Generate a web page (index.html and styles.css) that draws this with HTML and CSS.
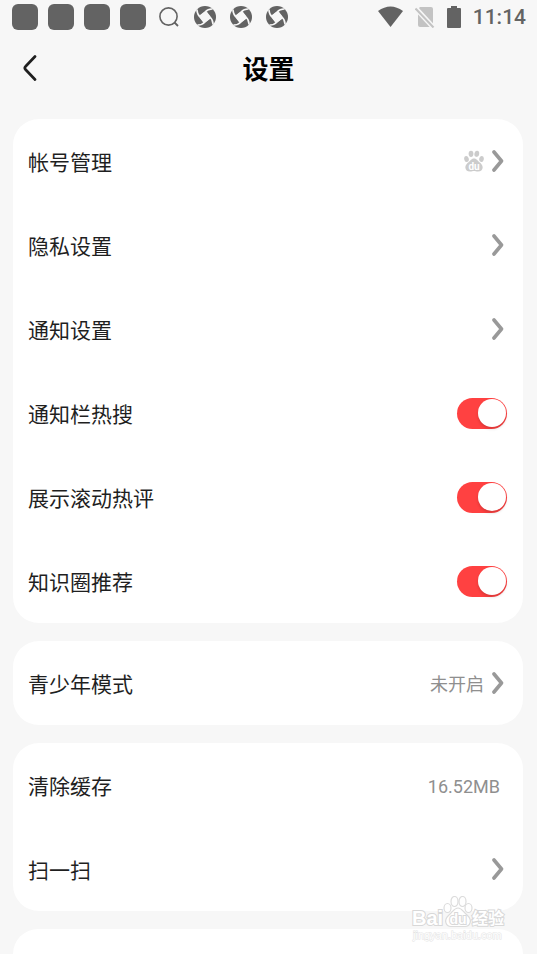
FILE: index.html
```html
<!DOCTYPE html>
<html lang="zh-CN">
<head>
  <meta charset="UTF-8">
  <meta name="viewport" content="width=device-width, initial-scale=1.0">
  <title>设置</title>
  <link rel="stylesheet" href="styles.css">
</head>
<body>
  <!-- Shared icons -->
  <svg class="sprite" aria-hidden="true">
    <symbol id="chevron" viewBox="0 0 12 22">
      <path d="M2 2 L9.500 11 L2 20" fill="none" stroke="#999" stroke-width="3.600" stroke-linecap="round" stroke-linejoin="round"/>
    </symbol>
    <symbol id="swirl" viewBox="0 0 22 22">
      <circle cx="11" cy="11" r="11" fill="#636363"/>
      <path d="M12 5 L17 12 L10 17 L5 10 Z" fill="#f7f7f7"/>
      <g fill="none" stroke="#f7f7f7" stroke-width="1.600" stroke-linecap="round">
        <path d="M6 10 L11 6 Q14 3 18 3"/>
        <path d="M12 6 L16 11 Q19 14 19 18"/>
        <path d="M16 12 L11 16 Q8 19 4 19"/>
        <path d="M10 16 L6 11 Q3 8 3 4"/>
      </g>
    </symbol>
  </svg>

  <!-- Status bar -->
  <div class="status-bar">
    <div class="status-left">
      <span class="app-square"></span>
      <span class="app-square"></span>
      <span class="app-square"></span>
      <span class="app-square"></span>
      <svg class="status-icon" viewBox="0 0 26 26">
        <circle cx="12.500" cy="12.500" r="8.600" fill="none" stroke="#636363" stroke-width="1.600"/>
        <path d="M18.500 18.500 L22 22" stroke="#636363" stroke-width="1.800"/>
      </svg>
      <svg class="status-icon swirl"><use href="#swirl"/></svg>
      <svg class="status-icon swirl"><use href="#swirl"/></svg>
      <svg class="status-icon swirl"><use href="#swirl"/></svg>
    </div>
    <div class="status-right">
      <svg width="25" height="22" viewBox="0 0 25 22">
        <path d="M0 5 Q12.500 -4 25 5 L12.500 21 Z" fill="#636363"/>
      </svg>
      <svg width="20" height="22" viewBox="0 0 20 22">
        <path d="M5 1 H16 Q18 1 18 3 V19 Q18 21 16 21 H5 Q3 21 3 19 V3 Z" fill="#c3c3c3"/>
        <path d="M0 1.500 L19 22" stroke="#f7f7f7" stroke-width="5"/>
        <path d="M0.500 2.500 L18.500 21.500" stroke="#c3c3c3" stroke-width="2"/>
      </svg>
      <svg width="14" height="22" viewBox="0 0 14 22">
        <path d="M4 0 H10 V2 H13 Q14 2 14 3 V21 Q14 22 13 22 H1 Q0 22 0 21 V3 Q0 2 1 2 H4 Z" fill="#636363"/>
      </svg>
      <span class="clock">11:14</span>
    </div>
  </div>

  <header class="header">
    <button class="back" type="button" aria-label="返回">
      <svg width="14" height="26" viewBox="0 0 14 26">
        <path d="M12 1.500 L2.500 11.500 Q1 13 2.500 14.500 L12 24.500" fill="none" stroke="#1f1f1f" stroke-width="2.700" stroke-linecap="round"/>
      </svg>
    </button>
    <h1>设置</h1>
  </header>

  <main class="settings">
    <section class="card">
      <a class="row" href="#account">
        <span class="label">帐号管理</span>
        <svg class="paw" viewBox="0 0 20 22">
          <g fill="#ccc">
            <ellipse cx="2.500" cy="9" rx="2.300" ry="3" transform="rotate(-12 2.500 9)"/>
            <ellipse cx="7" cy="3.800" rx="2.400" ry="3.100"/>
            <ellipse cx="12.800" cy="3.800" rx="2.400" ry="3.100" transform="rotate(8 12.800 3.800)"/>
            <ellipse cx="17.500" cy="9" rx="2.300" ry="3" transform="rotate(10 17.500 9)"/>
            <path d="M10 8.500 C13 8.500 13.500 11 16.500 13 C20.500 17 18.500 21.500 14 21.500 C12 21.500 11.500 21 10 21 C8.500 21 8 21.500 6 21.500 C1.500 21.500 -0.500 17 3.500 13 C6.500 11 7 8.500 10 8.500 Z"/>
          </g>
          <text class="paw-text" x="10" y="20" text-anchor="middle">du</text>
        </svg>
        <svg class="chevron"><use href="#chevron"/></svg>
      </a>
      <a class="row" href="#privacy">
        <span class="label">隐私设置</span>
        <svg class="chevron"><use href="#chevron"/></svg>
      </a>
      <a class="row" href="#notice">
        <span class="label">通知设置</span>
        <svg class="chevron"><use href="#chevron"/></svg>
      </a>
      <label class="row">
        <span class="label">通知栏热搜</span>
        <input class="switch" type="checkbox" checked>
      </label>
      <label class="row">
        <span class="label">展示滚动热评</span>
        <input class="switch" type="checkbox" checked>
      </label>
      <label class="row">
        <span class="label">知识圈推荐</span>
        <input class="switch" type="checkbox" checked>
      </label>
    </section>

    <section class="card">
      <a class="row" href="#teen">
        <span class="label">青少年模式</span>
        <span class="value">未开启</span>
        <svg class="chevron"><use href="#chevron"/></svg>
      </a>
    </section>

    <section class="card">
      <a class="row" href="#cache">
        <span class="label">清除缓存</span>
        <span class="value value-end">16.52MB</span>
      </a>
      <a class="row" href="#scan">
        <span class="label">扫一扫</span>
        <svg class="chevron"><use href="#chevron"/></svg>
      </a>
    </section>

    <section class="card card-rest"></section>
  </main>

  <!-- Watermark over the list -->
  <svg class="watermark" viewBox="0 0 100 48">
    <g fill="#fff" stroke="#dcdcdc" stroke-width="1.200">
      <ellipse cx="37.500" cy="12" rx="3.500" ry="4.500"/>
      <ellipse cx="44.500" cy="5.500" rx="3.500" ry="5"/>
      <ellipse cx="52.500" cy="5.500" rx="3.500" ry="5"/>
      <ellipse cx="58.500" cy="12" rx="3.500" ry="4.500"/>
      <path d="M48 12 C52 12 53 16 57 19 C63 24 60 30.500 55 30.500 H41 C36 30.500 33 24 39 19 C43 16 44 12 48 12 Z"/>
    </g>
    <g class="watermark-text">
      <text class="brand" x="2" y="29">Bai</text>
      <text class="brand-du" x="48" y="28" text-anchor="middle">du</text>
      <text class="brand-cn" x="62" y="28">经验</text>
      <text class="brand-url" x="3" y="43">jingyan.baidu.com</text>
    </g>
  </svg>
</body>
</html>
```

FILE: styles.css
```css
* {
  box-sizing: border-box;
}

body {
  margin: 0;
  min-height: 100vh;
  display: flex;
  flex-direction: column;
  position: relative;
  background-color: #f7f7f7;
  color: #1f1f1f;
  font-family: Roboto, "Noto Sans CJK SC", sans-serif;
}

.sprite {
  display: none;
}

/* Status bar */
.status-bar {
  height: 34px;
  padding: 0 11px 0 12px;
  display: flex;
  justify-content: space-between;
  align-items: center;
}

.status-left {
  display: flex;
  align-items: center;
  gap: 10px;
}

.app-square {
  width: 26px;
  height: 26px;
  border-radius: 6px;
  background-color: #636363;
}

.status-icon {
  width: 26px;
  height: 26px;
}

.swirl {
  padding: 2px;
}

.status-right {
  display: flex;
  align-items: center;
  gap: 12px;
}

.clock {
  color: #636363;
  font-size: 21px;
  font-weight: 500;
  line-height: 34px;
}

/* Title bar */
.header {
  height: 68px;
  padding: 0 16px;
  display: grid;
  grid-template-columns: 28px 1fr 28px;
  align-items: center;
}

.header h1 {
  margin: 0;
  padding-top: 4px;
  color: #000;
  font-size: 26px;
  font-weight: 700;
  line-height: 36px;
  text-align: center;
}

.back {
  height: 44px;
  padding: 0;
  border: none;
  background: none;
  display: flex;
  justify-content: center;
  align-items: center;
  cursor: pointer;
}

/* Settings list */
.settings {
  flex: 1;
  padding: 17px 14px 0 13px;
  display: flex;
  flex-direction: column;
  gap: 18px;
}

.card {
  border-radius: 26px;
  background-color: #fff;
}

.card-rest {
  flex: 1;
  border-radius: 26px 26px 0 0;
}

.row {
  height: 84px;
  padding: 0 19px 0 15px;
  display: flex;
  align-items: center;
  gap: 8px;
  color: inherit;
  text-decoration: none;
}

.label {
  flex: 1;
  padding-top: 4px;
  font-size: 21px;
  line-height: 30px;
}

.value {
  padding-top: 4px;
  color: #8f8f8f;
  font-size: 18px;
  line-height: 28px;
}

.value-end {
  padding-right: 4px;
}

.chevron {
  width: 12px;
  height: 22px;
}

.paw {
  width: 20px;
  height: 22px;
}

.paw-text {
  fill: #fff;
  font-size: 10px;
  font-weight: 700;
}

/* Toggle switch */
.switch {
  appearance: none;
  width: 50px;
  height: 31px;
  margin: 0 -3px 0 0;
  padding: 1px;
  border-radius: 16px;
  background-color: #ff4141;
  display: flex;
  align-items: center;
  cursor: pointer;
}

.switch::before {
  content: "";
  width: 28px;
  height: 28px;
  border-radius: 50%;
  background-color: #fff;
  box-shadow: 0 2px 3px rgba(0, 0, 0, 0.15);
}

.switch:checked {
  justify-content: flex-end;
}

.switch:not(:checked) {
  background-color: #ddd;
}

/* Watermark */
.watermark {
  position: absolute;
  right: 27px;
  bottom: 10px;
  width: 100px;
  height: 48px;
  pointer-events: none;
}

.watermark-text {
  fill: #fff;
  stroke: #d8d8d8;
  stroke-width: 2px;
  paint-order: stroke;
  font-family: "Liberation Sans", "Noto Sans CJK SC", sans-serif;
  font-weight: 700;
}

.brand {
  font-size: 20px;
}

.brand-du {
  font-size: 14px;
}

.brand-cn {
  font-size: 16px;
}

.brand-url {
  font-size: 11px;
  font-weight: 400;
  stroke: #e4e4e4;
  stroke-width: 1px;
}
```
